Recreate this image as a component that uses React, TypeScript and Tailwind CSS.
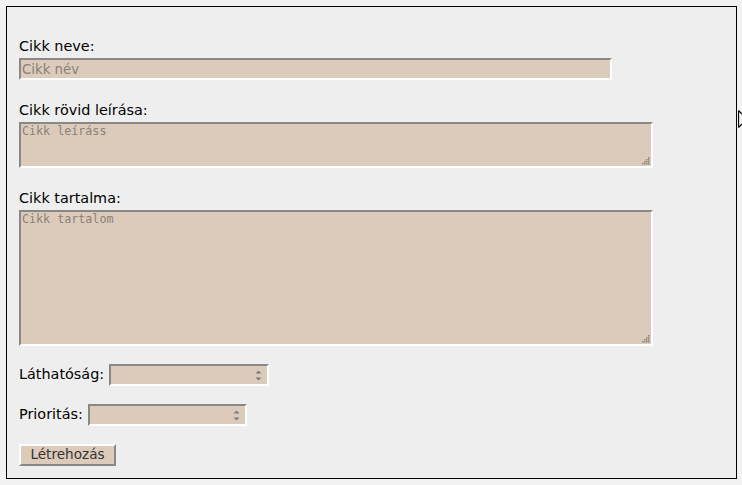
import React from "react";

const sans = "font-['DejaVu_Sans','Liberation_Sans',sans-serif]";
const mono = "font-['DejaVu_Sans_Mono','Liberation_Mono',monospace]";
const field =
  "block bg-[#dccbbb] border-2 border-t-[#888888] border-l-[#888888] border-b-white border-r-white outline-none text-[#1e1e1e] placeholder:text-[#8a8077]";

function Grip() {
  // dotted resize corner
  const dots = [
    [6, 0],
    [4, 2], [6, 2],
    [2, 4], [4, 4], [6, 4],
    [0, 6], [2, 6], [4, 6], [6, 6],
  ];
  return (
    <svg className="absolute right-[3px] bottom-[3px]" width="8" height="8" viewBox="0 0 8 8">
      {dots.map(([x, y]) => (
        <rect key={`${x}-${y}`} x={x} y={y} width="1.5" height="1.5" fill="#8f877f" />
      ))}
    </svg>
  );
}

function Spinner() {
  return (
    <svg className="absolute right-[7px] top-[6px] pointer-events-none" width="7" height="11" viewBox="0 0 7 11">
      <path d="M0.5 3.5 L3.5 0.5 L6.5 3.5 Z" fill="#7d7d7d" />
      <path d="M0.5 7.5 L3.5 10.5 L6.5 7.5 Z" fill="#7d7d7d" />
    </svg>
  );
}

function SelectBox({ width }: { width: string }) {
  return (
    <div className={`relative ${width}`}>
      <select className={`${field} appearance-none w-full h-[22px] ${sans} text-[13px]`} defaultValue="">
        <option value=""></option>
      </select>
      <Spinner />
    </div>
  );
}

export default function App() {
  return (
    <div className={`relative min-h-[485px] bg-[#f2f2f2] pt-[6px] pl-[6px] ${sans}`}>
      <form
        className="w-[731px] border border-black bg-[#eeeeee] pt-[27px] pb-[12px] px-[12px] text-[14.4px] text-black"
        onSubmit={(e) => e.preventDefault()}
      >
        <label className="block leading-[24px]">Cikk neve:</label>
        <input
          type="text"
          placeholder="Cikk név"
          className={`${field} w-[593px] h-[22px] px-[1px] ${sans} text-[13.3px]`}
        />

        <label className="block leading-[24px] mt-[18px]">Cikk rövid leírása:</label>
        <div className="relative w-[634px]">
          <textarea
            placeholder="Cikk leíráss"
            className={`${field} w-[634px] h-[46px] resize-none px-[1px] pt-0 ${mono} text-[11.7px] leading-[15px]`}
          />
          <Grip />
        </div>

        <label className="block leading-[24px] mt-[18px]">Cikk tartalma:</label>
        <div className="relative w-[634px]">
          <textarea
            placeholder="Cikk tartalom"
            className={`${field} w-[634px] h-[136px] resize-none px-[1px] pt-0 ${mono} text-[11.7px] leading-[15px]`}
          />
          <Grip />
        </div>

        <div className="flex items-center gap-[5px] mt-[18px] h-[22px]">
          <span>Láthatóság:</span>
          <SelectBox width="w-[160px]" />
        </div>

        <div className="flex items-center gap-[5px] mt-[18px] h-[22px]">
          <span>Prioritás:</span>
          <SelectBox width="w-[159px]" />
        </div>

        <button
          type="submit"
          className={`block mt-[18px] w-[97px] h-[22px] bg-[#dccbbb] border-2 border-t-white border-l-white border-b-[#888888] border-r-[#888888] text-[13.6px] text-[#333333] leading-none ${sans}`}
        >
          Létrehozás
        </button>
      </form>

      {/* mouse cursor peeking in at the right edge */}
      <svg className="absolute left-[738px] top-[110px]" width="4" height="18" viewBox="0 0 4 18">
        <path d="M0.5 0.5 V17.5 M0.5 0.5 L4 4 M0.5 17.5 L4 14" stroke="#000" strokeWidth="1.2" fill="none" />
      </svg>
    </div>
  );
}
